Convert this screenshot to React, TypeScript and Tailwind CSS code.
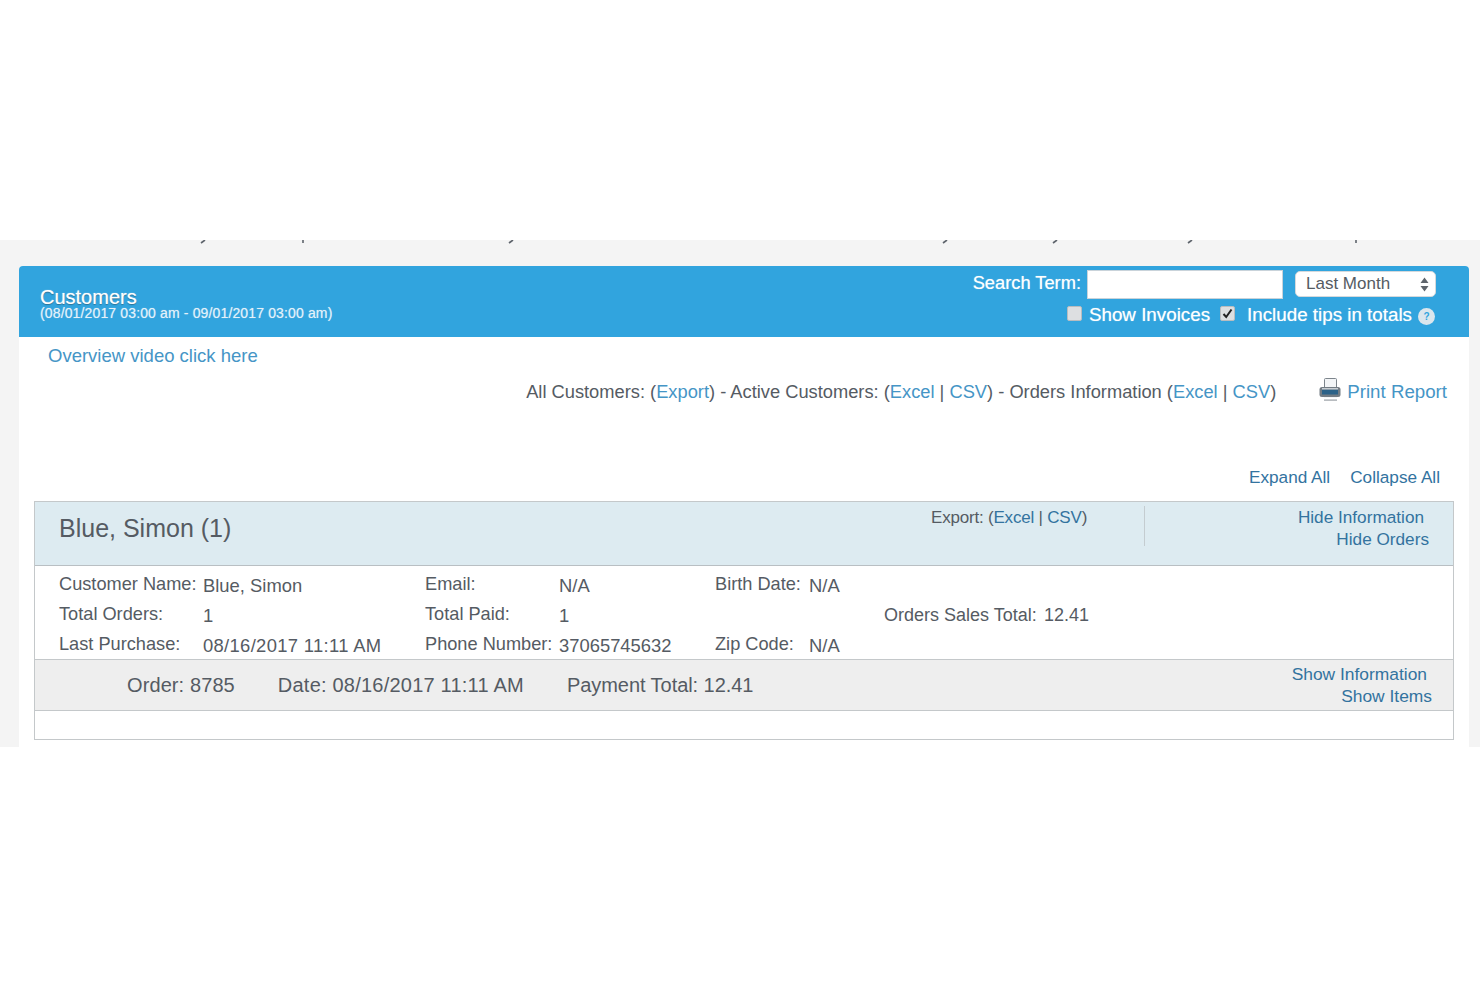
const font = "font-['Liberation_Sans',Arial,sans-serif]"

function Link({ children }: { children: React.ReactNode }) {
  return <a className="text-[#4595c6]">{children}</a>
}

function DarkLink({ children }: { children: React.ReactNode }) {
  return <a className="text-[#33739f]">{children}</a>
}

function PrinterIcon() {
  return (
    <svg width="22" height="23" viewBox="0 0 22 23" className="block">
      <rect x="5.5" y="0.5" width="12" height="10" rx="1" fill="#f3f5f7" stroke="#7d858c" strokeWidth="1" />
      <rect x="0.5" y="9" width="21" height="10" rx="2.5" fill="#737c84" />
      <rect x="3" y="11.5" width="16" height="5" fill="#2c6288" />
      <rect x="3" y="10" width="16" height="1.5" fill="#c9ced2" />
      <rect x="5" y="19" width="13" height="1" fill="#f3f5f7" />
      <rect x="5" y="21.5" width="13" height="1.2" fill="#9aa0a6" />
    </svg>
  )
}

function InfoRow({ children }: { children: React.ReactNode }) {
  return <div className="flex h-[30px] items-center">{children}</div>
}

export default function App() {
  return (
    <div className={`${font} h-[987px] bg-white text-[#555b63] overflow-hidden`}>
      <div className="h-[240px]" />
      <div className="relative h-[507px] bg-[#f4f4f4] pt-[26px] pl-[19px] pr-[11px]">
        {/* clipped descenders of the text above the band */}
        <svg width="1480" height="5" viewBox="0 0 1480 5" className="absolute left-0 top-0">
          <g stroke="#5d636b" strokeWidth="1.6" fill="none">
            <path d="M205 0 L201 3" />
            <path d="M303 0 L303 3" />
            <path d="M513 0 L509 3" />
            <path d="M947 0 L943 3" />
            <path d="M1057 0 L1053 3" />
            <path d="M1192 0 L1188 3" />
            <path d="M1356 0 L1356 3" />
          </g>
        </svg>
        <div className="h-[481px] bg-white rounded-t-[4px]">
          {/* Title bar */}
          <div className="h-[71px] bg-[#31a4de] rounded-t-[4px] flex justify-between text-white">
            <div className="pl-[21px] pt-[22px]">
              <div className="text-[20px] leading-[18px] [text-shadow:0_1px_1px_rgba(0,0,0,0.35),0_0_1px_rgba(255,255,255,0.8)]">Customers</div>
              <div className="text-[14px] leading-[12px] mt-[1px] tracking-[0.14px] text-[#e3f1fa] [text-shadow:0_0_1px_rgba(255,255,255,0.5)]">(08/01/2017 03:00 am - 09/01/2017 03:00 am)</div>
            </div>
            <div className="pr-[33px] pt-[4px] flex flex-col items-end">
              <div className="flex items-center h-[28px]">
                <span className="text-[18.3px] mr-[6px] -mt-[2px] [text-shadow:0_0_1px_rgba(255,255,255,0.6)]">Search Term:</span>
                <div className="w-[196px] h-[29px] bg-white border border-[#c9d3da]" />
                <div className="ml-[12px] w-[141px] h-[26px] bg-white rounded-[5px] border border-[#d5d9dc] flex items-center justify-between pl-[10px] pr-[6px] text-[17px] text-[#555b63]">
                  <span>Last Month</span>
                  <svg width="9" height="15" viewBox="0 0 9 15"><path d="M4.5 0.5 L8.5 6 L0.5 6 Z M4.5 14.5 L8.5 9 L0.5 9 Z" fill="#5f656c" /></svg>
                </div>
              </div>
              <div className="flex items-center h-[30px] mt-[1px] mr-[1px] pt-[3px] text-[18.8px] [text-shadow:0_0_1px_rgba(255,255,255,0.6)]">
                <span className="w-[15px] h-[15px] -mt-[5px] bg-[#dddfe1] border border-[#b9bcbf] rounded-[2px]" />
                <span className="ml-[7px]">Show Invoices</span>
                <span className="ml-[10px] w-[15px] h-[15px] -mt-[5px] bg-[#dddfe1] border border-[#b9bcbf] rounded-[2px] flex items-center justify-center">
                  <svg width="11" height="11" viewBox="0 0 11 11"><path d="M1.5 6 L4.2 9 L9.5 1.5" fill="none" stroke="#222" strokeWidth="2" /></svg>
                </span>
                <span className="ml-[12px]">Include tips in totals</span>
                <span className="ml-[6px] w-[17px] h-[17px] mt-[2px] rounded-full bg-[#dbe6ed] text-[#31a4de] text-[10px] font-bold flex items-center justify-center [text-shadow:none]">?</span>
              </div>
            </div>
          </div>

          <div className="pl-[29px] pt-[8px] text-[18.5px] leading-[22px]"><Link>Overview video click here</Link></div>

          <div className="flex justify-end items-center h-[36px] mt-[7px] pr-[22px] text-[18.3px]">
            <span>
              All Customers: (<Link>Export</Link>) - Active Customers: (<Link>Excel</Link> | <Link>CSV</Link>) - Orders Information (<Link>Excel</Link> | <Link>CSV</Link>)
            </span>
            <span className="ml-[43px] mr-[6px] -mt-[5px]"><PrinterIcon /></span>
            <span className="text-[18.7px]"><Link>Print Report</Link></span>
          </div>

          <div className="flex justify-end gap-[20px] mt-[55px] pr-[29px] text-[17.2px] leading-[24px]">
            <DarkLink>Expand All</DarkLink>
            <DarkLink>Collapse All</DarkLink>
          </div>

          {/* Customer card */}
          <div className="mx-[15px] mt-[12px] h-[239px] border border-[#c4c8ca]">
            <div className="h-[64px] bg-[#ddebf1] border-b border-[#b9bfc3] flex">
              <div className="pl-[24px] pt-[9px] text-[25px] leading-[34px] flex-1">Blue, Simon (1)</div>
              <div className="w-[213px] pt-[5px] text-[17px] leading-[22px] tracking-[-0.2px]">
                Export: (<DarkLink>Excel</DarkLink> | <DarkLink>CSV</DarkLink>)
              </div>
              <div className="w-[309px] h-[40px] mt-[4px] border-l border-[#c4ccd0] pr-[24px] text-[17.2px] leading-[22px] text-right">
                <div className="pr-[5px]"><DarkLink>Hide Information</DarkLink></div>
                <div><DarkLink>Hide Orders</DarkLink></div>
              </div>
            </div>

            <div className="h-[93px] pt-[4px] pl-[24px] flex text-[18.2px]">
              <div className="w-[366px]">
                <InfoRow><span className="w-[144px]">Customer Name:</span><span className="mt-[1px] text-[18.4px]">Blue, Simon</span></InfoRow>
                <InfoRow><span className="w-[144px]">Total Orders:</span><span className="mt-[1px] text-[18.4px]">1</span></InfoRow>
                <InfoRow><span className="w-[144px]">Last Purchase:</span><span className="mt-[1px] text-[18.4px] tracking-[0.33px]">08/16/2017 11:11 AM</span></InfoRow>
              </div>
              <div className="w-[290px]">
                <InfoRow><span className="w-[134px]">Email:</span><span className="mt-[1px] text-[18.4px]">N/A</span></InfoRow>
                <InfoRow><span className="w-[134px]">Total Paid:</span><span className="mt-[1px] text-[18.4px]">1</span></InfoRow>
                <InfoRow><span className="w-[134px]">Phone Number:</span><span className="mt-[1px] text-[18.4px]">37065745632</span></InfoRow>
              </div>
              <div className="w-[169px]">
                <InfoRow><span className="w-[94px]">Birth Date:</span><span className="mt-[1px] text-[18.4px]">N/A</span></InfoRow>
                <InfoRow />
                <InfoRow><span className="w-[94px]">Zip Code:</span><span className="mt-[1px] text-[18.4px]">N/A</span></InfoRow>
              </div>
              <div>
                <InfoRow />
                <InfoRow><span className="w-[160px] text-[18px]">Orders Sales Total:</span><span className="mt-[1px] text-[18px]">12.41</span></InfoRow>
              </div>
            </div>

            <div className="h-[52px] bg-[#eeeeee] border-y border-[#c4c8ca] flex items-center justify-between pl-[92px] pr-[21px]">
              <div className="flex gap-[43px] text-[20px]">
                <span className="tracking-[0.1px]">Order: 8785</span>
                <span className="tracking-[0.22px]">Date: 08/16/2017 11:11 AM</span>
                <span className="tracking-[-0.05px]">Payment Total: 12.41</span>
              </div>
              <div className="text-[17.4px] leading-[22px] text-right">
                <div className="pr-[5px]"><DarkLink>Show Information</DarkLink></div>
                <div><DarkLink>Show Items</DarkLink></div>
              </div>
            </div>
          </div>
        </div>
      </div>
    </div>
  )
}
